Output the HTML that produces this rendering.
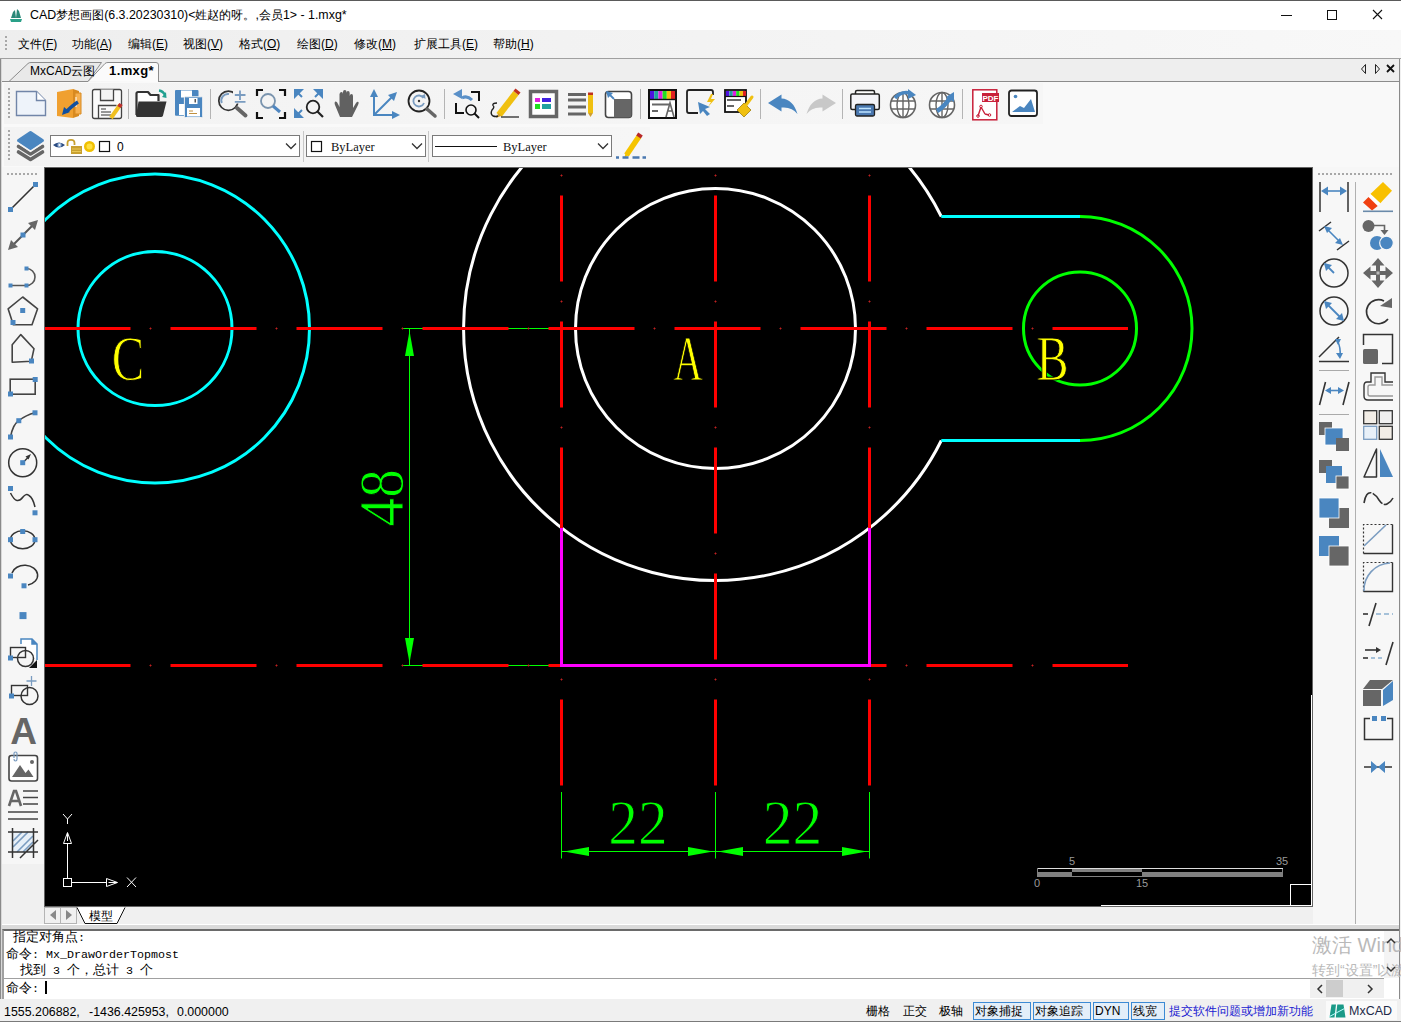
<!DOCTYPE html>
<html><head><meta charset="utf-8">
<style>
*{margin:0;padding:0;box-sizing:border-box}
html,body{width:1401px;height:1022px;overflow:hidden;background:#f0f0f0;font-family:"Liberation Sans",sans-serif;font-size:12px;color:#000}
.a{position:absolute}
.t{position:absolute;white-space:nowrap;line-height:1}
.m{font-family:"Liberation Mono",monospace}
svg{position:absolute;overflow:visible}
.tg{position:absolute;top:1002px;height:18px;background:#e3eef9;border:1px solid #3c8ad4;line-height:16px;padding-left:1px;font-size:12px;color:#000;white-space:nowrap}
</style></head><body>
<!-- title bar -->
<div class="a" style="left:0;top:0;width:1401px;height:30px;background:#fff"></div>
<div class="a" style="left:0;top:0;width:1401px;height:1px;background:#5a5a5a"></div>
<div class="t" style="left:30px;top:9px;font-size:12.4px">CAD梦想画图(6.3.20230310)&lt;姓赵的呀。,会员1&gt; - 1.mxg*</div>
<!-- menu bar -->
<div class="a" style="left:0;top:30px;width:1401px;height:28px;background:linear-gradient(90deg,#eeeeee 0%,#f2f2f2 40%,#f8f8f8 100%)"></div>
<div class="a" style="left:0;top:58px;width:1401px;height:1px;background:#a0a0a0"></div>
<div id="menu">
<div class="t" style="left:18px;top:38px">文件(<u>F</u>)</div>
<div class="t" style="left:72px;top:38px">功能(<u>A</u>)</div>
<div class="t" style="left:128px;top:38px">编辑(<u>E</u>)</div>
<div class="t" style="left:183px;top:38px">视图(<u>V</u>)</div>
<div class="t" style="left:239px;top:38px">格式(<u>O</u>)</div>
<div class="t" style="left:297px;top:38px">绘图(<u>D</u>)</div>
<div class="t" style="left:354px;top:38px">修改(<u>M</u>)</div>
<div class="t" style="left:414px;top:38px">扩展工具(<u>E</u>)</div>
<div class="t" style="left:493px;top:38px">帮助(<u>H</u>)</div>
</div>

<!-- tab strip -->
<div class="a" style="left:0;top:59px;width:1401px;height:23px;background:#eeeeee"></div>
<svg width="1401" height="30" style="left:0;top:56px" viewBox="0 56 1401 30">
<path d="M0 81.5H88M158.5 81.5H1401" stroke="#8c8c8c" stroke-width="1"/>
<path d="M9 81.5L28 63.5Q29 62.5 31 62.5H101.5L88 81.5Z" fill="#e9e9e9" stroke="#8c8c8c" stroke-width="1"/>
<path d="M88 81.5L105 63.5Q106 62.5 108 62.5H156Q158.5 62.5 158.5 65V82" fill="#fbfbfb" stroke="#8c8c8c" stroke-width="1"/>
</svg>
<div class="t" style="left:30px;top:65px;font-size:12px">MxCAD云图</div>
<div class="t" style="left:109px;top:64px;font-size:13px;font-weight:bold;letter-spacing:0.4px">1.mxg*</div>

<!-- toolbars area -->
<div class="a" style="left:1px;top:82px;width:1399px;height:85px;background:#f9f9f9"></div>
<div class="a" style="left:4px;top:83px;width:1039px;height:41px;background:linear-gradient(90deg,#f3f3f3,#f6f6f6)"></div>
<div class="a" style="left:4px;top:127px;width:646px;height:39px;background:linear-gradient(90deg,#f3f3f3,#f6f6f6)"></div>

<!-- combo boxes -->
<div class="a" style="left:50px;top:135px;width:250px;height:22px;background:#fff;border:1px solid #7a7a7a"></div>
<div class="a" style="left:306px;top:135px;width:120px;height:22px;background:#fff;border:1px solid #7a7a7a"></div>
<div class="a" style="left:432px;top:135px;width:180px;height:22px;background:#fff;border:1px solid #7a7a7a"></div>

<!-- left toolbar -->
<div class="a" style="left:2px;top:167px;width:42px;height:697px;background:#f6f6f6"></div>
<!-- right toolbar -->
<div class="a" style="left:1313px;top:167px;width:86px;height:757px;background:#f7f7f7"></div>
<div class="a" style="left:1355px;top:182px;width:1px;height:742px;background:#b0b0b0"></div>
<!-- window borders -->
<div class="a" style="left:0;top:59px;width:1px;height:963px;background:#8a8a8a"></div><div class="a" style="left:1px;top:59px;width:1px;height:963px;background:#d8d8d8"></div>
<div class="a" style="left:1399px;top:59px;width:1px;height:963px;background:#8a8a8a"></div><div class="a" style="left:1400px;top:59px;width:1px;height:963px;background:#f0f0f0"></div>

<!-- canvas -->
<div class="a" style="left:44px;top:167px;width:1269px;height:740px;background:#000;border:1px solid #646464"></div>
<svg width="1401" height="1022" style="left:0;top:0" viewBox="0 0 1401 1022">
<defs><clipPath id="cv"><rect x="45" y="168" width="1267" height="738"/></clipPath></defs>
<g clip-path="url(#cv)" fill="none">
<circle cx="155" cy="328.5" r="77" stroke="#00ffff" stroke-width="3"/>
<circle cx="155" cy="328.5" r="154.5" stroke="#00ffff" stroke-width="3"/>
<circle cx="715.5" cy="328.5" r="140" stroke="#fff" stroke-width="3"/>
<path d="M941.3 216.5A252 252 0 1 0 941.3 440.5" stroke="#fff" stroke-width="3"/>
<path d="M941.3 216.5H1080M941.3 440.5H1080" stroke="#00ffff" stroke-width="3"/>
<path d="M1080 216.5A112 112 0 0 1 1080 440.5" stroke="#00ff00" stroke-width="3"/>
<circle cx="1080" cy="328.5" r="56.5" stroke="#00ff00" stroke-width="3"/>
<path d="M403 328.5H552M403 665.5H552M409.5 328.5V665.5M561.5 792V858.5M715.5 792V858.5M869.5 792V858.5M561.5 851.5H869.5" stroke="#00ff00" stroke-width="1"/>
<g fill="#00ff00">
<polygon points="409.5,331 405,356 414,356"/><polygon points="409.5,663 405,638 414,638"/>
<polygon points="564,851.5 589,847 589,856"/><polygon points="713,851.5 688,847 688,856"/>
<polygon points="718,851.5 743,847 743,856"/><polygon points="867,851.5 842,847 842,856"/>
</g>
<path d="M44.5 328.5H130.5M170.5 328.5H256.5M296.5 328.5H382.5M422.5 328.5H508.5M548.5 328.5H634.5M674.5 328.5H760.5M800.5 328.5H886.5M926.5 328.5H1012.5M1052.5 328.5H1128" stroke="#ff0000" stroke-width="3"/>
<path d="M149.5 328.5h2M150.5 327.5v2M275.5 328.5h2M276.5 327.5v2M401.5 328.5h2M402.5 327.5v2M527.5 328.5h2M528.5 327.5v2M653.5 328.5h2M654.5 327.5v2M779.5 328.5h2M780.5 327.5v2M905.5 328.5h2M906.5 327.5v2M1031.5 328.5h2M1032.5 327.5v2" stroke="#c02020" stroke-width="1"/>
<path d="M44.5 665.5H130.5M170.5 665.5H256.5M296.5 665.5H382.5M422.5 665.5H508.5M548.5 665.5H634.5M674.5 665.5H760.5M800.5 665.5H886.5M926.5 665.5H1012.5M1052.5 665.5H1128" stroke="#ff0000" stroke-width="3"/>
<path d="M149.5 665.5h2M150.5 664.5v2M275.5 665.5h2M276.5 664.5v2M401.5 665.5h2M402.5 664.5v2M527.5 665.5h2M528.5 664.5v2M653.5 665.5h2M654.5 664.5v2M779.5 665.5h2M780.5 664.5v2M905.5 665.5h2M906.5 664.5v2M1031.5 665.5h2M1032.5 664.5v2" stroke="#c02020" stroke-width="1"/>
<path d="M561.5 195.5v86M561.5 321.5v86M561.5 447.5v86M561.5 573.5v86M561.5 699.5v86" stroke="#ff0000" stroke-width="3"/>
<path d="M560.5 175.5h2M561.5 174.5v2M560.5 301.5h2M561.5 300.5v2M560.5 427.5h2M561.5 426.5v2M560.5 553.5h2M561.5 552.5v2M560.5 679.5h2M561.5 678.5v2" stroke="#c02020" stroke-width="1"/>
<path d="M715.5 195.5v86M715.5 321.5v86M715.5 447.5v86M715.5 573.5v86M715.5 699.5v86" stroke="#ff0000" stroke-width="3"/>
<path d="M714.5 175.5h2M715.5 174.5v2M714.5 301.5h2M715.5 300.5v2M714.5 427.5h2M715.5 426.5v2M714.5 553.5h2M715.5 552.5v2M714.5 679.5h2M715.5 678.5v2" stroke="#c02020" stroke-width="1"/>
<path d="M869.5 195.5v86M869.5 321.5v86M869.5 447.5v86M869.5 573.5v86M869.5 699.5v86" stroke="#ff0000" stroke-width="3"/>
<path d="M868.5 175.5h2M869.5 174.5v2M868.5 301.5h2M869.5 300.5v2M868.5 427.5h2M869.5 426.5v2M868.5 553.5h2M869.5 552.5v2M868.5 679.5h2M869.5 678.5v2" stroke="#c02020" stroke-width="1"/>
<path d="M561.5 528V665.5H869.5V528" stroke="#ff00ff" stroke-width="3"/>
<g font-family="Liberation Serif" fill="#ffff00" font-size="62.5" stroke="#000" stroke-width="1">
<text x="0" y="0" text-anchor="middle" transform="translate(128 380) scale(0.78 1)">C</text>
<text x="0" y="0" text-anchor="middle" transform="translate(688 380) scale(0.645 1)">A</text>
<text x="0" y="0" text-anchor="middle" transform="translate(1052.5 380) scale(0.77 1)">B</text>
</g>
<g font-family="Liberation Serif" fill="#00ff00" font-size="64" stroke="#000" stroke-width="1">
<text x="0" y="0" text-anchor="middle" transform="translate(638 844.3) scale(0.93 1)">22</text>
<text x="0" y="0" text-anchor="middle" transform="translate(792.5 844.3) scale(0.93 1)">22</text>
<text x="0" y="0" text-anchor="middle" transform="translate(403.3 497.8) rotate(-90) scale(0.895 1)">48</text>
</g>
<g stroke="#fff" stroke-width="1">
<rect x="63.5" y="878.5" width="8" height="8"/>
<path d="M71.5 882.5H106M67.5 878.5V843M127 877.5L136 887M136 877.5L127 887M63 814L67.5 819L72 814M67.5 819V824"/>
<path d="M106.5 878.5L117.5 882.5L106.5 886.5ZM108.5 882.5H117"/>
<path d="M63.5 843.5L67.5 832.5L71.5 843.5ZM67.5 841V833"/>
</g>
<g>
<rect x="1037.5" y="868.5" width="245" height="8" fill="none" stroke="#808080"/>
<rect x="1072" y="869" width="70" height="3" fill="#808080"/>
<rect x="1037" y="872" width="35" height="5" fill="#808080"/>
<rect x="1142" y="872" width="141" height="5" fill="#808080"/>
<path d="M1038 868.5H1283" stroke="#ddd"/>
</g>
<g font-family="Liberation Sans" fill="#9a9a9a" font-size="11" text-anchor="middle">
<text x="1072" y="865">5</text><text x="1282" y="865">35</text><text x="1037" y="887">0</text><text x="1142" y="887">15</text>
</g>
<path d="M1311.5 695V906M1101 905.5H1312" stroke="#fff" stroke-width="1"/>
<rect x="1290.5" y="884.5" width="21" height="21" fill="none" stroke="#fff" stroke-width="1"/>
</g></svg>

<!-- model tab bar -->
<div class="a" style="left:44px;top:907px;width:1269px;height:17px;background:#f0f0f0"></div>
<div class="a" style="left:44px;top:907px;width:17px;height:17px;border:1px solid #b4b4b4"></div>
<div class="a" style="left:60px;top:907px;width:17px;height:17px;border:1px solid #b4b4b4"></div>
<svg width="60" height="20" style="left:70px;top:905px" viewBox="70 905 60 20">
<path d="M77 907.5L85 923.5H117L125 907.5" fill="#fff" stroke="#111" stroke-width="1"/>
</svg>
<div class="t" style="left:89px;top:910px;font-size:12px">模型</div>
<div class="a" style="left:2px;top:924px;width:1397px;height:1px;background:#fff"></div>
<div class="a" style="left:2px;top:925px;width:1397px;height:4px;background:#dadada"></div>

<!-- command area -->
<div class="a" style="left:2px;top:929px;width:1397px;height:70px;background:#fff;border-top:2px solid #6a6a6a;border-left:2px solid #a0a0a0"></div>
<div class="a" style="left:4px;top:978px;width:1380px;height:1px;background:#a0a0a0"></div>
<div class="a" style="left:1384px;top:931px;width:15px;height:47px;background:#f4f4f4"></div>
<div class="a" style="left:1310px;top:979px;width:74px;height:19px;background:#f0f0f0"></div>
<div class="a" style="left:1326px;top:980px;width:17px;height:17px;background:#cdcdcd"></div>
<div class="t" style="left:13px;top:931px;font-size:12.7px">指定对角点<span class="m" style="font-size:11.67px">:</span></div>
<div class="t" style="left:6px;top:948px;font-size:12.7px">命令<span class="m" style="font-size:11.67px">: Mx_DrawOrderTopmost</span></div>
<div class="t" style="left:20px;top:964px;font-size:12.7px">找到<span class="m" style="font-size:11.67px"> 3 </span>个，总计<span class="m" style="font-size:11.67px"> 3 </span>个</div>
<div class="t" style="left:6px;top:982px;font-size:12.7px">命令<span class="m" style="font-size:11.67px">:</span></div>
<div class="a" style="left:45px;top:981px;width:2px;height:13px;background:#000"></div>
<div class="t" style="left:1312px;top:935px;font-size:20px;color:#b9b9b9">激活 Windows</div>
<div class="t" style="left:1312px;top:963px;font-size:14px;color:#b9b9b9">转到“设置”以激活Windows。</div>

<!-- status bar -->
<div class="a" style="left:0;top:999px;width:1401px;height:23px;background:#f0f0f0"></div>
<div class="a" style="left:0;top:1021px;width:1401px;height:1px;background:#7a7a7a"></div>
<div class="t" style="left:4px;top:1006px;font-size:12.4px">1555.206882,</div><div class="t" style="left:89px;top:1006px;font-size:12.4px">-1436.425953,</div><div class="t" style="left:177px;top:1006px;font-size:12.4px">0.000000</div>
<div class="t" style="left:866px;top:1005px">栅格</div>
<div class="t" style="left:903px;top:1005px">正交</div>
<div class="t" style="left:939px;top:1005px">极轴</div>
<div class="tg" style="left:973px;width:58px">对象捕捉</div>
<div class="tg" style="left:1033px;width:58px">对象追踪</div>
<div class="tg" style="left:1093px;width:36px">DYN</div>
<div class="tg" style="left:1131px;width:34px">线宽</div>
<div class="t" style="left:1169px;top:1005px;color:#1a1ad0">提交软件问题或增加新功能</div>
<div class="a" style="left:1326px;top:1001px;width:71px;height:19px;background:#fafafa"></div><div class="t" style="left:1349px;top:1005px;font-size:12.5px;color:#1e2a48">MxCAD</div>
<svg width="1401" height="1022" style="left:0;top:0;pointer-events:none" viewBox="0 0 1401 1022">
<g transform="translate(16 89)"><path d="M0.5 2.5H20.5L29.5 11.5V26.5H0.5Z" fill="#eef3fa" stroke="#7185a8" stroke-width="1.4"/><path d="M20.5 2.5V11.5H29.5" fill="#fff" stroke="#7185a8" stroke-width="1.4"/></g>
<g transform="translate(54 89)"><path d="M3 3L19 0V29L3 27Z" fill="#f0a030"/><path d="M19 0L25 2V27L19 29Z" fill="#d88a20"/><path d="M21 4H27V25H21Z" fill="#f6b050" stroke="#d88a20"/><path d="M22 8L22 18" stroke="#fff" stroke-width="1"/><path d="M24 13Q19 16 12 23" stroke="#1050a0" stroke-width="3.5" fill="none"/><path d="M8 26L10 18L16 23Z" fill="#1050a0"/></g>
<g transform="translate(92 89)"><rect x="0.5" y="0.5" width="29" height="29" rx="2" fill="#fafafa" stroke="#444" stroke-width="1.3"/><path d="M8.5 0.5V11.5H21.5V0.5" fill="#f4f4f4" stroke="#444" stroke-width="1.3"/><path d="M6.5 29.5V16.5H24.5" fill="none" stroke="#444" stroke-width="1.3"/><path d="M9 20H14M9 23H19M9 26H19" stroke="#777" stroke-width="1.5"/><path d="M28 16L19 29" stroke="#f0c020" stroke-width="4"/><path d="M29 15L27 18" stroke="#c03030" stroke-width="4"/></g>
<g transform="translate(135 89)"><path d="M1.5 26V4.5A1.5 1.5 0 0 1 3 3H13L15.5 6H23.5V12" fill="#fff" stroke="#333" stroke-width="2.2" stroke-linejoin="round"/><path d="M1 26.5L3.5 12.5H31.5L28 26.5Q27.5 28 26 28H2.5Q1 28 1 26.5Z" fill="#333"/><path d="M24 1.5Q28 2 30 6" stroke="#20a090" stroke-width="2.5" fill="none"/><path d="M27 8L31 3L31.5 9Z" fill="#20a090"/></g>
<g transform="translate(174 89)"><rect x="1" y="1" width="23.5" height="25.7" rx="1" fill="#4a86c0"/><rect x="7" y="1.5" width="11" height="7" fill="#fff"/><rect x="5" y="15" width="10" height="11" fill="#fff"/><rect x="10.4" y="7.8" width="18.3" height="20.8" rx="1" fill="#4a86c0" stroke="#f4f4f4" stroke-width="1"/><rect x="15" y="9" width="8.5" height="6" fill="#fff"/><rect x="20.5" y="10" width="1.5" height="3.5" fill="#555"/><rect x="13" y="19" width="13" height="8.5" fill="#fff"/><path d="M15 22H19M15 24.5H23" stroke="#c09040" stroke-width="1"/></g>
<g transform="translate(218 89)"><circle cx="10.4" cy="11.7" r="9.6" fill="none" stroke="#333" stroke-width="1.7"/><rect x="15" y="1" width="14" height="13.5" fill="#f4f4f4"/><path d="M3.8 14A6.6 6.6 0 0 1 11 5" fill="none" stroke="#7a9cc0" stroke-width="2"/><path d="M22 1.5V11M16.8 6H27.5M16.8 12.8H27.5" stroke="#7a9cc0" stroke-width="1.8"/><path d="M19 19L27.5 26.5" stroke="#666" stroke-width="4" stroke-linecap="round"/></g>
<g transform="translate(256 89)"><path d="M1 7V1H7M23 1H29V7M1 23V29H7M23 29H29V23" fill="none" stroke="#111" stroke-width="2.2"/><circle cx="12" cy="12" r="7" fill="none" stroke="#7a94ae" stroke-width="1.8"/><path d="M17 17L24 23" stroke="#4f86c0" stroke-width="3"/></g>
<g transform="translate(294 89)"><path d="M0 0H10L0 10Z M29 0V10L19 0Z M0 29V19L10 29Z" fill="#4a86c0"/><path d="M2 2L8 8M27 2L21 8M2 27L8 21" stroke="#4a86c0" stroke-width="2"/><circle cx="19" cy="18" r="6.3" fill="none" stroke="#222" stroke-width="1.8"/><path d="M23.5 22.5L29 28" stroke="#222" stroke-width="2.2"/></g>
<g transform="translate(332 89)"><path d="M8 28L3 16Q2 13 3.5 12.5Q5 12 6 15L7.5 18V5Q8 3 9.5 3Q11 3 11 5V14V3Q11 1 12.8 1Q14.5 1 14.5 3V14V4Q14.5 2 16 2Q17.7 2 17.7 4V15V7Q18 5 19.5 5Q21 5 21 7V19L24 14Q25.5 12 26.5 13Q27 14 26 16L20 28Z" fill="#616161"/></g>
<g transform="translate(370 89)"><path d="M4 6V26H26M4 26L24 6" fill="none" stroke="#4a86c0" stroke-width="2"/><path d="M4 0L0 8H8Z M30 26L22 22V30Z M27 3L18 6L24 12Z" fill="#4a86c0"/></g>
<g transform="translate(408 89)"><circle cx="11" cy="12" r="10.5" fill="none" stroke="#222" stroke-width="1.8"/><path d="M15.5 9A5.5 5.5 0 1 0 16 14" fill="none" stroke="#7a9cc0" stroke-width="1.8"/><path d="M13 7L17 5L17.5 10Z" fill="#7a9cc0"/><circle cx="11" cy="12" r="1.2" fill="#333"/><path d="M19 20L27 27" stroke="#666" stroke-width="3.5" stroke-linecap="round"/></g>
<g transform="translate(452 89)"><path d="M10 9Q15 6 20 11" fill="none" stroke="#5a90c8" stroke-width="3"/><path d="M1 5L10 0V10Z" fill="#5a90c8"/><path d="M19 3H27V12M4 14V24H12" fill="none" stroke="#111" stroke-width="2"/><circle cx="19" cy="21" r="5" fill="none" stroke="#111" stroke-width="1.6"/><path d="M22.5 24.5L27 29" stroke="#111" stroke-width="2"/></g>
<g transform="translate(490 89)"><path d="M9 26L26 4" stroke="#f0c010" stroke-width="6.5"/><path d="M26 4L28 1.5" stroke="#c03020" stroke-width="6.5"/><path d="M6 29L8.5 24L11 27Z" fill="#d0a030"/><path d="M11 28H29" stroke="#444" stroke-width="1.5"/><path d="M7 14Q2 14 3 16.5Q5 18 2 21Q0 25 3 27Q6 28 8 27" fill="none" stroke="#222" stroke-width="1.4"/></g>
<g transform="translate(528 89)"><rect x="2.5" y="2.5" width="26" height="25" fill="#fff" stroke="#666" stroke-width="3.5"/><rect x="7" y="9" width="5" height="4" fill="#e020e0"/><rect x="14" y="9" width="9" height="4" fill="#4020e0"/><rect x="7" y="15" width="5" height="5" fill="#20e020"/><rect x="14" y="15" width="9" height="5" fill="#20a0a0"/></g>
<g transform="translate(566 89)"><path d="M2 5.5H20M2 11H20M2 18H20M2 25H20" stroke="#666" stroke-width="3"/><path d="M24.5 5V24" stroke="#f0c010" stroke-width="5"/><path d="M24.5 3.5V6" stroke="#c03020" stroke-width="5"/><path d="M22 24L24.5 28L27 24Z" fill="#d0a030"/></g>
<g transform="translate(604 89)"><rect x="1.5" y="2.5" width="26" height="26" rx="3" fill="#fff" stroke="#444" stroke-width="1.6"/><path d="M10 10H27.5V25.5Q27.5 28.5 24.5 28.5H10Z" fill="#666"/><path d="M10 10L3 3" stroke="#4a86c0" stroke-width="1.8"/><path d="M2 2L9 4L4 9Z" fill="#4a86c0"/></g>
<g transform="translate(648 89)"><rect x="1" y="1" width="27" height="28" fill="#fff" stroke="#111" stroke-width="2"/><rect x="2" y="2" width="4.2" height="8" fill="#5010e0"/><rect x="6.2" y="2" width="4.2" height="8" fill="#20a0a0"/><rect x="10.4" y="2" width="4.2" height="8" fill="#e020e0"/><rect x="14.6" y="2" width="4.2" height="8" fill="#20e020"/><rect x="18.8" y="2" width="4.2" height="8" fill="#f0c010"/><rect x="23" y="2" width="4" height="8" fill="#e02020"/><path d="M1 10.5H28" stroke="#111" stroke-width="1.4"/><path d="M4 15.5H21M4 22H10" stroke="#666" stroke-width="2.2"/><path d="M18 28L22 14L26 28M19.5 22H24.5" fill="none" stroke="#666" stroke-width="1.6"/></g>
<g transform="translate(686 89)"><path d="M12 24H3Q1 24 1 22V3Q1 1 3 1H25Q27 1 27 3V6" fill="none" stroke="#222" stroke-width="1.8"/><path d="M12 13L24 18L19 20L24 25L21 27L17 22L14 25Z" fill="#4a86c0"/><path d="M25 5L21 13H25L22 18L29 10H25L27 5Z" fill="#f0c010"/></g>
<g transform="translate(724 89)"><rect x="1" y="1" width="21" height="22" fill="#fff" stroke="#111" stroke-width="1.8"/><rect x="2" y="2" width="3.4" height="5" fill="#5010e0"/><rect x="5.4" y="2" width="3.4" height="5" fill="#20a0a0"/><rect x="8.8" y="2" width="3.4" height="5" fill="#e020e0"/><rect x="12.2" y="2" width="3.4" height="5" fill="#20e020"/><rect x="15.6" y="2" width="3.4" height="5" fill="#f0c010"/><rect x="19" y="2" width="3" height="5" fill="#e02020"/><path d="M1 7.5H22" stroke="#111" stroke-width="1.2"/><path d="M3 11H17M3 17H10" stroke="#666" stroke-width="1.8"/><path d="M13 21L20 14L27 21L20 28Z" fill="#f0c010" stroke="#a08010" stroke-width="0.8"/><path d="M22 16L28 8" stroke="#f0c010" stroke-width="3" stroke-linecap="round"/></g>
<g transform="translate(768 89)"><path d="M0 14L13.5 5.6V9.5Q25 10 29.5 25Q24 17.5 13.5 18.5V22.6Z" fill="#4a86c0"/></g>
<g transform="translate(806 89)"><path d="M30 14L16.5 5.6V9.5Q5 10 0.5 25Q6 17.5 16.5 18.5V22.6Z" fill="#c8c8c8"/></g>
<g transform="translate(850 89)"><rect x="5.5" y="1.5" width="19" height="6" rx="1.5" fill="#fff" stroke="#222" stroke-width="1.5"/><rect x="0.8" y="5" width="28.5" height="15.5" rx="1.5" fill="#f4f4f8" stroke="#222" stroke-width="1.5"/><rect x="5.5" y="15.5" width="19" height="11.5" rx="1.5" fill="#4a78b0" stroke="#222" stroke-width="1.3"/><path d="M9 19.5H21M9 23H21" stroke="#bfe4ff" stroke-width="1.6"/></g>
<g transform="translate(889 89)"><circle cx="14" cy="16" r="12.5" fill="#fff" stroke="#666" stroke-width="1.6"/><ellipse cx="14" cy="16" rx="6" ry="12.5" fill="none" stroke="#666" stroke-width="1.4"/><path d="M14 3.5V28.5M2 12H26M2 20H26" stroke="#666" stroke-width="1.4"/><path d="M6 9Q12 2 21 4" fill="none" stroke="#4a86c0" stroke-width="3.5"/><path d="M19 0L27 6L19 10Z" fill="#4a86c0"/></g>
<g transform="translate(928 89)"><circle cx="14" cy="16" r="12.5" fill="#fff" stroke="#666" stroke-width="1.6"/><ellipse cx="14" cy="16" rx="6" ry="12.5" fill="none" stroke="#666" stroke-width="1.4"/><path d="M14 3.5V28.5M2 12H26M2 20H26" stroke="#666" stroke-width="1.4"/><path d="M9 22Q16 18 22 9" fill="none" stroke="#4a86c0" stroke-width="4.5"/><path d="M26 3L26 13L18 8Z" fill="#4a86c0"/></g>
<g transform="translate(972 89)"><rect x="0.8" y="0.8" width="24" height="30" fill="#fff" stroke="#c8203a" stroke-width="1.5"/><rect x="10" y="4" width="17" height="9" fill="#c8203a"/><text x="18.5" y="11.5" font-family="Liberation Sans" font-weight="bold" font-size="8" fill="#fff" text-anchor="middle">PDF</text><path d="M9 18L13 25M9 18L6 27M13 25L17 26" fill="none" stroke="#c8203a" stroke-width="1.4"/><circle cx="9" cy="17.5" r="1.3" fill="none" stroke="#c8203a"/><circle cx="6" cy="27" r="1.3" fill="none" stroke="#c8203a"/><circle cx="17.5" cy="26" r="1.3" fill="none" stroke="#c8203a"/></g>
<g transform="translate(1008 89)"><rect x="1" y="1.5" width="28" height="25.5" rx="2.5" fill="#fff" stroke="#222" stroke-width="1.8"/><circle cx="7.5" cy="7.5" r="1.8" fill="#4a86c0"/><path d="M4 23L12 17L16 19L23 10L27 23Z" fill="#4a86c0"/></g>
<path d="M128.5 89V119" stroke="#b4b4b4" stroke-width="1"/>
<path d="M210.5 89V119" stroke="#b4b4b4" stroke-width="1"/>
<path d="M444.5 89V119" stroke="#b4b4b4" stroke-width="1"/>
<path d="M640.5 89V119" stroke="#b4b4b4" stroke-width="1"/>
<path d="M760.5 89V119" stroke="#b4b4b4" stroke-width="1"/>
<path d="M842.5 89V119" stroke="#b4b4b4" stroke-width="1"/>
<path d="M962.5 89V119" stroke="#b4b4b4" stroke-width="1"/>
<g transform="translate(8 182)"><path d="M3 27L27 3" stroke="#333" stroke-width="1.6"/><rect x="0.0" y="25.0" width="5" height="5" fill="#4a86c0"/><rect x="25.0" y="0.0" width="5" height="5" fill="#4a86c0"/></g>
<g transform="translate(8 220)"><path d="M6 24L24 6" stroke="#555" stroke-width="2"/><path d="M0 30L3 20L10 27Z M30 0L20 3L27 10Z" fill="#666"/><rect x="12.5" y="12.5" width="5" height="5" fill="#4a86c0"/></g>
<g transform="translate(8 258)"><path d="M2.5 27.5H18.5M18.5 10.5A8.5 8.5 0 0 1 18.5 27.5" fill="none" stroke="#555" stroke-width="1.6"/><rect x="0.5" y="25.5" width="4" height="4" fill="#4a86c0"/><rect x="16.5" y="25.5" width="4" height="4" fill="#4a86c0"/><rect x="16.5" y="8.5" width="4" height="4" fill="#4a86c0"/></g>
<g transform="translate(8 296)"><path d="M14.7 1L29.6 12.8L24 28.7H5.3L0.1 12.8Z" fill="none" stroke="#444" stroke-width="1.6" stroke-linejoin="round"/><rect x="12.2" y="12.0" width="5" height="5" fill="#4a86c0"/><rect x="2.5" y="24.0" width="5" height="5" fill="#4a86c0"/></g>
<g transform="translate(8 334)"><path d="M12.8 0.6L26 14.7L23.3 27.2L4.2 28.3V10.8Z" fill="none" stroke="#444" stroke-width="1.6" stroke-linejoin="round"/><rect x="21.0" y="24.5" width="5" height="5" fill="#4a86c0"/></g>
<g transform="translate(8 372)"><rect x="2.2" y="7.2" width="25" height="15" fill="none" stroke="#444" stroke-width="1.6"/><rect x="24.7" y="5.0" width="5" height="5" fill="#4a86c0"/><rect x="0.0" y="19.5" width="5" height="5" fill="#4a86c0"/></g>
<g transform="translate(8 410)"><path d="M2.5 27Q5 14 10.8 10.7Q18 5 27 2.8" fill="none" stroke="#444" stroke-width="1.6"/><rect x="0.0" y="24.5" width="5" height="5" fill="#4a86c0"/><rect x="8.3" y="8.2" width="5" height="5" fill="#4a86c0"/><rect x="24.5" y="0.2999999999999998" width="5" height="5" fill="#4a86c0"/></g>
<g transform="translate(8 448)"><circle cx="14.7" cy="14.7" r="14" fill="none" stroke="#333" stroke-width="1.5"/><path d="M15 14.5L21 8.5" stroke="#333" stroke-width="1.5"/><path d="M23 6L17.5 8.5L20.5 11.5Z" fill="#333"/><rect x="12.2" y="12.2" width="5" height="5" fill="#4a86c0"/></g>
<g transform="translate(8 486)"><path d="M2.5 7Q6 14 9 14.5Q12 15 15 11Q18 7 21 9.5Q25 12 27 21" fill="none" stroke="#333" stroke-width="1.5"/><rect x="0.0" y="0.0" width="5" height="5" fill="#4a86c0"/><rect x="24.5" y="24.3" width="5" height="5" fill="#4a86c0"/></g>
<g transform="translate(8 524)"><ellipse cx="14.7" cy="15.7" rx="12.3" ry="9" fill="none" stroke="#333" stroke-width="1.5"/><rect x="0.0" y="13.2" width="5" height="5" fill="#4a86c0"/><rect x="24.5" y="13.2" width="5" height="5" fill="#4a86c0"/><rect x="12.2" y="5.0" width="5" height="5" fill="#4a86c0"/></g>
<g transform="translate(8 562)"><path d="M4 11A13 10 0 1 1 20 23" fill="none" stroke="#333" stroke-width="1.5"/><rect x="0.0" y="11.5" width="5" height="5" fill="#4a86c0"/><rect x="13.5" y="21.3" width="5" height="5" fill="#4a86c0"/></g>
<g transform="translate(8 600)"><rect x="11.5" y="12.1" width="7" height="7" fill="#4a86c0"/></g>
<g transform="translate(8 638)"><path d="M13 6V1H24L29 6V22" fill="#fff" stroke="#4a86c0" stroke-width="1.5"/><path d="M24 1V6H29" fill="#4a86c0" stroke="#4a86c0" stroke-width="1.5"/><path d="M21 30L29 22V30Z" fill="#111"/><rect x="2.5" y="9.5" width="15" height="10" fill="none" stroke="#333" stroke-width="1.4"/><circle cx="17.5" cy="20.5" r="8" fill="none" stroke="#333" stroke-width="1.5"/><rect x="0.0" y="17.5" width="5" height="5" fill="#4a86c0"/></g>
<g transform="translate(8 676)"><rect x="3.5" y="9.5" width="16" height="10" fill="none" stroke="#333" stroke-width="1.4"/><circle cx="21.5" cy="20" r="8.5" fill="none" stroke="#333" stroke-width="1.5"/><path d="M23.5 0V10M18.5 5H28.5" stroke="#7a9cc0" stroke-width="1.3"/><rect x="1.0" y="17.5" width="5" height="5" fill="#4a86c0"/></g>
<g transform="translate(8 714)"><text x="15.5" y="29.5" font-family="Liberation Sans" font-weight="bold" font-size="37" fill="#666" text-anchor="middle">A</text></g>
<g transform="translate(8 752)"><rect x="1" y="3.5" width="28.5" height="25.5" rx="2.5" fill="#fff" stroke="#444" stroke-width="1.6"/><path d="M4 25L12 13L17.5 21L20.5 17.5L25.5 25Z" fill="#666"/><circle cx="24" cy="10" r="2" fill="#666"/><path d="M6 6V1.5Q6 0 7.5 0Q9 0 9 1.5V7Q9 9 7.5 9Q6 9 6 7" fill="none" stroke="#7a9cc0" stroke-width="1.2"/></g>
<g transform="translate(8 790)"><path d="M1 16L6 1H8L13 16M3.5 11H10.5" fill="none" stroke="#666" stroke-width="2.6"/><path d="M15 1H30M15 7.5H30M15 14H30M0 22H30M0 29H30" stroke="#444" stroke-width="1.5"/></g>
<g transform="translate(8 828)"><rect x="5" y="4" width="20" height="20" fill="#e8f0f8"/><path d="M5 13L14 4M5 19L20 4M9 24L25 8M15 24L25 14" stroke="#7a9cc0" stroke-width="1.6"/><path d="M0 4H30M0 24H30M4.5 0V30M25.5 0V30M12 30L30 12" stroke="#333" stroke-width="1.5"/></g>
<g transform="translate(1319 182)"><path d="M1 0V30M29 0V30" stroke="#333" stroke-width="1.5"/><path d="M4 9H26" stroke="#4a86c0" stroke-width="1.6"/><path d="M2 9L9 4.5V13.5Z M28 9L21 4.5V13.5Z" fill="#4a86c0"/></g>
<g transform="translate(1319 220)"><path d="M0 11L12 2M18 30L30 21" stroke="#333" stroke-width="1.5"/><path d="M7 8L22 23" stroke="#4a86c0" stroke-width="1.6"/><path d="M5 6L13 8L8 13Z M24 25L16 23L21 18Z" fill="#4a86c0"/></g>
<g transform="translate(1319 258)"><circle cx="15" cy="15" r="14" fill="none" stroke="#333" stroke-width="1.5"/><path d="M6 6L15 15" stroke="#4a86c0" stroke-width="1.8"/><path d="M5 5L13 7L7 13Z" fill="#4a86c0"/></g>
<g transform="translate(1319 296)"><circle cx="15" cy="15" r="14" fill="none" stroke="#333" stroke-width="1.5"/><path d="M7 7L23 23" stroke="#4a86c0" stroke-width="1.8"/><path d="M5 5L13 7L7 13Z M25 25L17 23L23 17Z" fill="#4a86c0"/></g>
<g transform="translate(1319 334)"><path d="M0 23L20 3M0 27.5H30" stroke="#333" stroke-width="1.5"/><path d="M18.5 7Q22 14 21 22" fill="none" stroke="#4a86c0" stroke-width="1.6"/><path d="M16 5L22 5L19 11Z M21 25L17 19L24 19Z" fill="#4a86c0"/></g>
<g transform="translate(1319 376)"><path d="M6.5 6L0.5 29M30 6L24 29" stroke="#333" stroke-width="1.6"/><path d="M8 14.5H23" stroke="#4a86c0" stroke-width="1.6"/><path d="M6 14.5L12 11V18Z M25 14.5L19 11V18Z" fill="#4a86c0"/></g>
<g transform="translate(1319 422)"><rect x="0" y="0" width="13" height="13" fill="#666"/><rect x="6" y="6" width="18" height="17" fill="#4a86c0" stroke="#fff" stroke-width="0.8"/><rect x="17" y="16" width="13" height="13" fill="#666"/></g>
<g transform="translate(1319 460)"><rect x="0" y="0" width="13" height="13" fill="#666"/><rect x="7" y="6" width="16" height="17" fill="#4a86c0"/><rect x="13" y="2" width="4" height="4" fill="#fff" opacity="0"/><rect x="17" y="16" width="13" height="13" fill="#666" stroke="#fff" stroke-width="0.8"/></g>
<g transform="translate(1319 498)"><rect x="10" y="10" width="20" height="20" fill="#666"/><rect x="0" y="0" width="20" height="20" fill="#4a86c0" stroke="#fff" stroke-width="0.8"/></g>
<g transform="translate(1319 536)"><rect x="0" y="0" width="20" height="20" fill="#4a86c0"/><rect x="10" y="10" width="20" height="20" fill="#666" stroke="#fff" stroke-width="0.8"/></g>
<path d="M1319 370.5H1349M1319 414.5H1349" stroke="#aaa" stroke-width="1"/>
<g transform="translate(1363 182)"><path d="M20 0L29 8.8L17.3 21.3L7.4 12Z" fill="#f8c000"/><path d="M7.4 12L17.3 21.3L14.7 24L5.5 15Z" fill="#fff"/><path d="M0 20.6L5.5 15L14.7 24L9 28.6Z" fill="#f04010"/><path d="M0 29.3H30" stroke="#6a8aaa" stroke-width="1.6"/></g>
<g transform="translate(1363 220)"><circle cx="5.5" cy="6" r="6" fill="#666"/><path d="M11 5.5H21.5V11" fill="none" stroke="#666" stroke-width="1.6"/><path d="M17.5 10H25.5L21.5 15Z" fill="#666"/><circle cx="14" cy="23" r="7" fill="#4a86c0"/><circle cx="23.5" cy="23" r="6.8" fill="#4a86c0" stroke="#f7f7f7" stroke-width="1.2"/></g>
<g transform="translate(1363 258)"><path d="M13 6H17V13H24V17H17V24H13V17H6V13H13Z" fill="#666"/><path d="M15 0L21.5 7.5H8.5Z M15 30L21.5 22.5H8.5Z M0 15L7.5 8.5V21.5Z M30 15L22.5 8.5V21.5Z" fill="#666"/><rect x="13.5" y="13.5" width="3" height="3" fill="#bbb"/></g>
<g transform="translate(1363 296)"><path d="M25 23A12 12 0 1 1 21 5" fill="none" stroke="#333" stroke-width="1.6"/><path d="M17 10L29 2V12Z" fill="#666"/></g>
<g transform="translate(1363 334)"><path d="M0.5 11V0.5H29.5V29.5H19" fill="none" stroke="#333" stroke-width="1.5"/><rect x="0" y="15" width="15" height="15" rx="1.5" fill="#666"/></g>
<g transform="translate(1363 372)"><path d="M30 10H22V1H8V10H4Q1 10 1 14V24Q1 28 5 28H30" fill="none" stroke="#333" stroke-width="1.4"/><path d="M30 13H19V5H12V13H7Q5 13 5 15V22Q5 24 7 24H30" fill="none" stroke="#999" stroke-width="1.4"/></g>
<g transform="translate(1363 410)"><rect x="0.7" y="0.7" width="13" height="13" fill="#f2ede6" stroke="#333" stroke-width="1.3"/><rect x="16.3" y="0.7" width="13" height="13" fill="#f0f0f0" stroke="#333" stroke-width="1.3"/><rect x="0.7" y="16.3" width="13" height="13" fill="#e8f0f8" stroke="#7a9cc0" stroke-width="1.3"/><rect x="16.3" y="16.3" width="13" height="13" fill="#f2ede6" stroke="#333" stroke-width="1.3"/></g>
<g transform="translate(1363 448)"><path d="M13.5 1V29H1Z" fill="none" stroke="#333" stroke-width="1.5" stroke-linejoin="round"/><path d="M17 1V29H30Z" fill="#4a86c0"/></g>
<g transform="translate(1363 486)"><path d="M1 17Q3 5 9 7Q13 9 16 14Q20 20 24 18Q28 16 30 12" fill="none" stroke="#333" stroke-width="1.6" stroke-dasharray="14 1.5"/></g>
<g transform="translate(1363 524)"><path d="M0.5 29.5V0.5H29.5" fill="none" stroke="#333" stroke-width="1.2" stroke-dasharray="2 2"/><path d="M29.5 0.5V29.5H0.5" fill="none" stroke="#333" stroke-width="1.4"/><path d="M1 22L23 1" stroke="#7a9cc0" stroke-width="1.6"/></g>
<g transform="translate(1363 562)"><path d="M0.5 29.5V0.5H29.5" fill="none" stroke="#333" stroke-width="1.2" stroke-dasharray="2 2"/><path d="M29.5 0.5V29.5H0.5" fill="none" stroke="#333" stroke-width="1.4"/><path d="M1 29A27 27 0 0 1 27 1" fill="none" stroke="#7a9cc0" stroke-width="1.6"/></g>
<g transform="translate(1363 600)"><path d="M0 14H5" stroke="#333" stroke-width="1.6"/><path d="M13 3L6 26" stroke="#333" stroke-width="1.6"/><path d="M13 14H30" stroke="#8ab0d0" stroke-width="1.6" stroke-dasharray="5 3"/></g>
<g transform="translate(1363 638)"><path d="M2 12H15" stroke="#333" stroke-width="1.6"/><path d="M13 9L18 12L13 15Z" fill="#333"/><path d="M0 20H5" stroke="#333" stroke-width="1.6"/><path d="M8 20H21" stroke="#8ab0d0" stroke-width="1.6" stroke-dasharray="4 3"/><path d="M30 4L23 27" stroke="#333" stroke-width="1.6"/></g>
<g transform="translate(1363 676)"><path d="M0 14H18V30H0Z" fill="#666"/><path d="M0 13L7 4H30L19 13Z" fill="#666"/><path d="M20 14L30 5V24L20 30Z" fill="#4a86c0"/></g>
<g transform="translate(1363 714)"><path d="M7 4.5H1.5V25.5H29.5V4.5H24" fill="none" stroke="#333" stroke-width="1.5"/><rect x="9" y="2" width="5" height="5" fill="#4a86c0"/><rect x="18" y="2" width="5" height="5" fill="#4a86c0"/></g>
<g transform="translate(1363 752)"><path d="M1 15H29" stroke="#333" stroke-width="1.5"/><path d="M15 15L8 9V21Z M15 15L22 9V21Z" fill="#4a86c0"/></g>
<rect x="7" y="173" width="2" height="2" fill="#a8a8a8"/><rect x="11" y="173" width="2" height="2" fill="#a8a8a8"/><rect x="15" y="173" width="2" height="2" fill="#a8a8a8"/><rect x="19" y="173" width="2" height="2" fill="#a8a8a8"/><rect x="23" y="173" width="2" height="2" fill="#a8a8a8"/><rect x="27" y="173" width="2" height="2" fill="#a8a8a8"/><rect x="31" y="173" width="2" height="2" fill="#a8a8a8"/><rect x="35" y="173" width="2" height="2" fill="#a8a8a8"/>
<rect x="1318" y="173" width="2" height="2" fill="#a8a8a8"/><rect x="1322" y="173" width="2" height="2" fill="#a8a8a8"/><rect x="1326" y="173" width="2" height="2" fill="#a8a8a8"/><rect x="1330" y="173" width="2" height="2" fill="#a8a8a8"/><rect x="1334" y="173" width="2" height="2" fill="#a8a8a8"/><rect x="1338" y="173" width="2" height="2" fill="#a8a8a8"/><rect x="1342" y="173" width="2" height="2" fill="#a8a8a8"/><rect x="1346" y="173" width="2" height="2" fill="#a8a8a8"/><rect x="1350" y="173" width="2" height="2" fill="#a8a8a8"/><rect x="1354" y="173" width="2" height="2" fill="#a8a8a8"/><rect x="1358" y="173" width="2" height="2" fill="#a8a8a8"/><rect x="1362" y="173" width="2" height="2" fill="#a8a8a8"/><rect x="1366" y="173" width="2" height="2" fill="#a8a8a8"/><rect x="1370" y="173" width="2" height="2" fill="#a8a8a8"/><rect x="1374" y="173" width="2" height="2" fill="#a8a8a8"/><rect x="1378" y="173" width="2" height="2" fill="#a8a8a8"/><rect x="1382" y="173" width="2" height="2" fill="#a8a8a8"/><rect x="1386" y="173" width="2" height="2" fill="#a8a8a8"/><rect x="1390" y="173" width="2" height="2" fill="#a8a8a8"/>
<rect x="8" y="88" width="2" height="2" fill="#a8a8a8"/><rect x="8" y="92" width="2" height="2" fill="#a8a8a8"/><rect x="8" y="96" width="2" height="2" fill="#a8a8a8"/><rect x="8" y="100" width="2" height="2" fill="#a8a8a8"/><rect x="8" y="104" width="2" height="2" fill="#a8a8a8"/><rect x="8" y="108" width="2" height="2" fill="#a8a8a8"/><rect x="8" y="112" width="2" height="2" fill="#a8a8a8"/><rect x="8" y="116" width="2" height="2" fill="#a8a8a8"/>
<rect x="8" y="130" width="2" height="2" fill="#a8a8a8"/><rect x="8" y="134" width="2" height="2" fill="#a8a8a8"/><rect x="8" y="138" width="2" height="2" fill="#a8a8a8"/><rect x="8" y="142" width="2" height="2" fill="#a8a8a8"/><rect x="8" y="146" width="2" height="2" fill="#a8a8a8"/><rect x="8" y="150" width="2" height="2" fill="#a8a8a8"/><rect x="8" y="154" width="2" height="2" fill="#a8a8a8"/><rect x="8" y="158" width="2" height="2" fill="#a8a8a8"/>
<rect x="5" y="36" width="2" height="2" fill="#a8a8a8"/><rect x="5" y="40" width="2" height="2" fill="#a8a8a8"/><rect x="5" y="44" width="2" height="2" fill="#a8a8a8"/><rect x="5" y="48" width="2" height="2" fill="#a8a8a8"/>
<g transform="translate(17 131)"><path d="M1.5 15.5L13.5 23L25.5 15.5M1.5 21L13.5 28.5L25.5 21" fill="none" stroke="#666" stroke-width="3.6" stroke-linecap="round" stroke-linejoin="round"/><path d="M1.5 9.5L13.5 1.5L25.5 9.5L13.5 17.5Z" fill="#4a86c0" stroke="#4a86c0" stroke-width="3" stroke-linejoin="round"/><path d="M0 11.5L13.5 20.5L27 11.5" fill="none" stroke="#f5f5f5" stroke-width="1.3"/></g>
<g transform="translate(53 141)"><path d="M0 4Q6 -1 12 4Q6 9 0 4Z" fill="#2a4a80"/><circle cx="6.5" cy="4" r="2.2" fill="#8aa8d0"/><circle cx="6.5" cy="4" r="1" fill="#fff"/></g>
<g transform="translate(66 139)"><path d="M1.5 7V4Q1.5 0.8 5 0.8Q8.5 0.8 8.5 4V6" fill="none" stroke="#c8a030" stroke-width="1.8"/><rect x="5" y="7" width="11" height="8" fill="#c8a030"/><path d="M6 10H15M6 12.5H15" stroke="#f0d060" stroke-width="0.8"/></g>
<circle cx="89.5" cy="146.5" r="5.5" fill="#f0c000"/><circle cx="89.5" cy="146.5" r="3" fill="#ffe040"/>
<rect x="99.5" y="141.5" width="10" height="10" fill="#fff" stroke="#111" stroke-width="1.2"/>
<text x="117" y="151" font-family="Liberation Sans" font-size="12" fill="#000">0</text>
<path d="M286 143.5L291 148.5L296 143.5" fill="none" stroke="#333" stroke-width="1.3"/><path d="M412 143.5L417 148.5L422 143.5" fill="none" stroke="#333" stroke-width="1.3"/><path d="M598 143.5L603 148.5L608 143.5" fill="none" stroke="#333" stroke-width="1.3"/>
<rect x="311.5" y="141.5" width="10" height="10" fill="#fff" stroke="#111" stroke-width="1.2"/>
<text x="331" y="150.5" font-family="Liberation Serif" font-size="12.5" fill="#111">ByLayer</text>
<path d="M435 146.5H497" stroke="#111" stroke-width="1"/>
<text x="503" y="150.5" font-family="Liberation Serif" font-size="12.5" fill="#111">ByLayer</text>
<g transform="translate(617 131)"><path d="M9.5 24L22 5.5" stroke="#f5c400" stroke-width="5.5"/><path d="M21.5 6L23.5 3" stroke="#b82828" stroke-width="5.5"/><path d="M7.5 26.5L8.5 22L11.5 24Z" fill="#f5c400"/><path d="M-1 26.5h3M5.5 26.5h6M15.5 26.5h7M25.5 26.5h3.5" stroke="#4a78b0" stroke-width="2.6"/></g>
<path d="M303.5 131V162M428.5 131V162" stroke="#c8c8c8"/>
<g transform="translate(9 8)"><path d="M1 11L13 11L12 14L2 14Z" fill="#2aa088"/><path d="M2 10L4 4L6 2L7 10Z M7 10L8 1L10 3L12 10Z" fill="#2a8878"/></g>
<path d="M1281 15.5H1292" stroke="#111" stroke-width="1"/>
<rect x="1327.5" y="10.5" width="9" height="9" fill="none" stroke="#111" stroke-width="1"/>
<path d="M1373 10L1382 19M1382 10L1373 19" stroke="#111" stroke-width="1.1"/>
<path d="M1361.5 69L1365.5 64.5V73.5Z M1379.5 69L1375.5 64.5V73.5Z" fill="none" stroke="#222" stroke-width="1"/>
<path d="M1387 65L1394 72M1394 65L1387 72" stroke="#111" stroke-width="1.8"/>
<path d="M50 915L56 910V920Z" fill="#888"/><path d="M72 915L66 910V920Z" fill="#888"/>
<path d="M1331.5 1004.5H1336L1334.5 1017.5H1329.5Z M1337.3 1004.5H1343.5L1345.5 1017.5H1335.8Z" fill="#1a9a88"/><path d="M1329.5 1016.5L1344.5 1008.5" stroke="#bff" stroke-width="1"/>
<path d="M1387 943L1391 939L1395 943M1387 967L1391 971L1395 967" fill="none" stroke="#333" stroke-width="1.5"/>
<path d="M1322 985L1318 989L1322 993M1368 985L1372 989L1368 993" fill="none" stroke="#333" stroke-width="1.5"/>
</svg>
</body></html>
